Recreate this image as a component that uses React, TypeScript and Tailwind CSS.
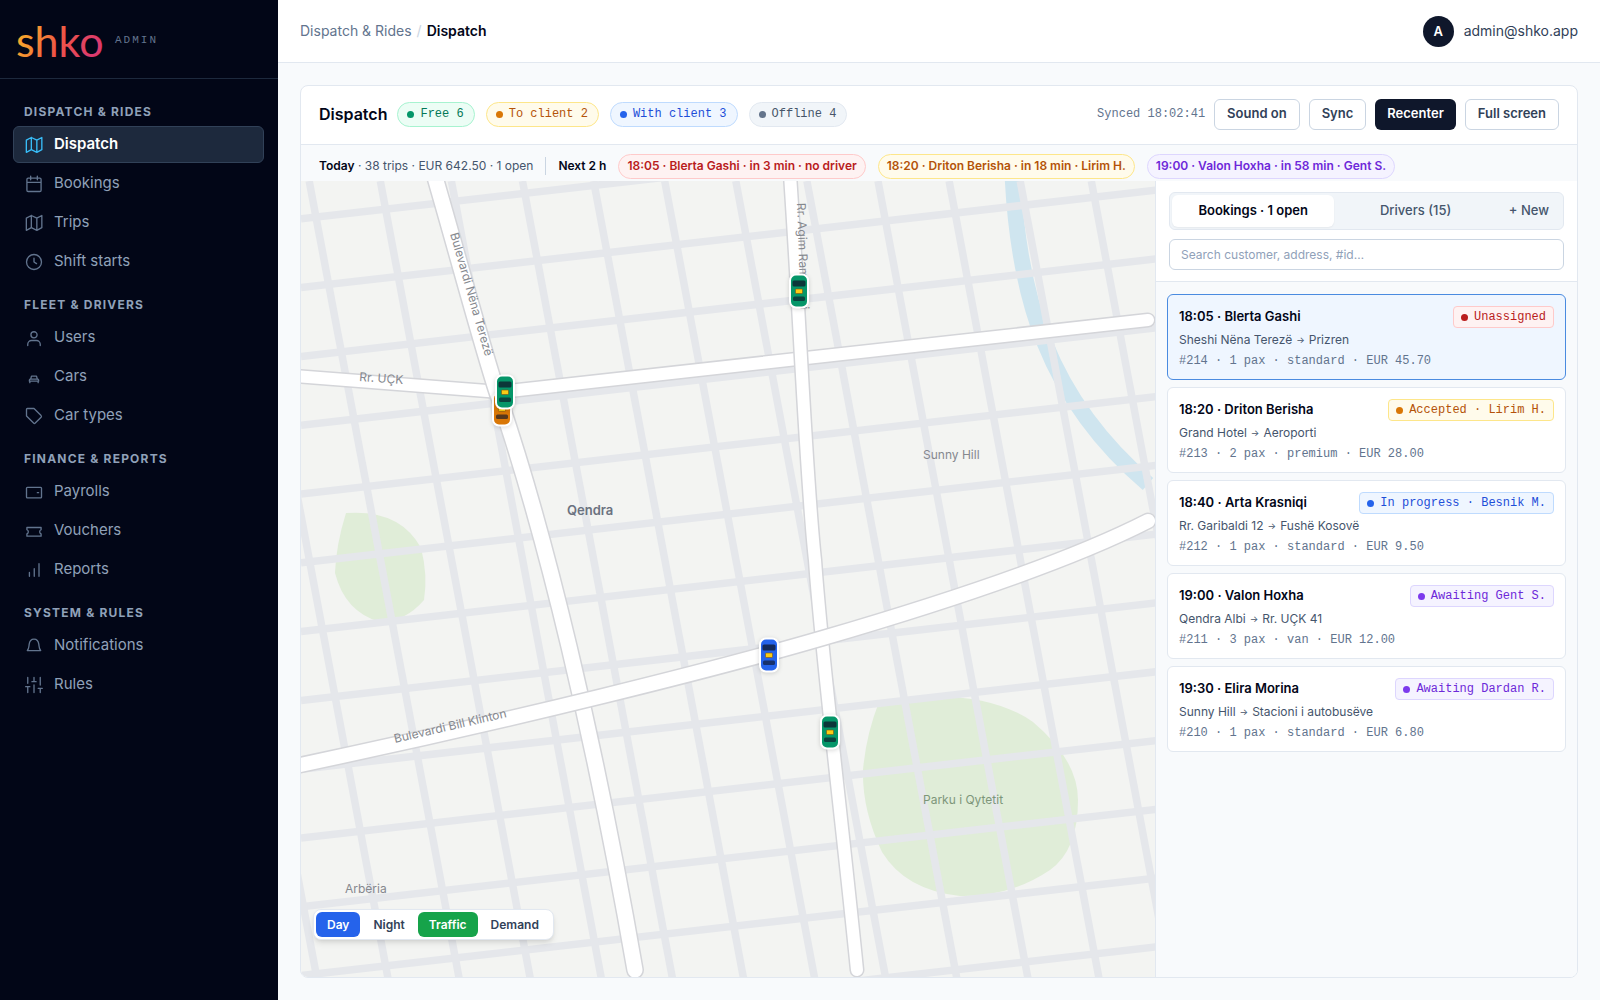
import { useState } from "react";

type Tone = "green" | "amber" | "blue" | "gray" | "red" | "violet";

const toneClasses: Record<Tone, string> = {
  green: "border-[#a7f3d0] bg-[#ecfdf5] text-[#047857]",
  amber: "border-[#fde68a] bg-[#fffbeb] text-[#b45309]",
  blue: "border-[#bfdbfe] bg-[#eff6ff] text-[#1d4ed8]",
  gray: "border-[#e2e8f0] bg-[#f1f5f9] text-[#475569]",
  red: "border-[#fecaca] bg-[#fef2f2] text-[#b91c1c]",
  violet: "border-[#ddd6fe] bg-[#f5f3ff] text-[#6d28d9]",
};

const dotClasses: Record<Tone, string> = {
  green: "bg-[#059669]",
  amber: "bg-[#d97706]",
  blue: "bg-[#2563eb]",
  gray: "bg-[#64748b]",
  red: "bg-[#b91c1c]",
  violet: "bg-[#7c3aed]",
};

const icons: Record<string, string> = {
  map: "M2.8 6.2v14.6l6-3.2 6.6 3.2 6-3.2V3l-6 3.2L8.8 3zM8.8 3v14.6M15.4 6.2v14.6",
  calendar:
    "M5 5h14a1.5 1.5 0 0 1 1.5 1.5v13a1.5 1.5 0 0 1-1.5 1.5H5a1.5 1.5 0 0 1-1.5-1.5v-13A1.5 1.5 0 0 1 5 5zM3.5 10h17M8 2.5V7M16 2.5V7",
  clock: "M12 3a9 9 0 1 1 0 18 9 9 0 0 1 0-18zM12 7.5V12l3 2",
  user: "M12 4.5a3.7 3.7 0 1 1 0 7.4 3.7 3.7 0 0 1 0-7.4zM4.5 21v-1.5A4.5 4.5 0 0 1 9 15h6a4.5 4.5 0 0 1 4.5 4.5V21",
  car: "M8 14.5L9 11h6l1 3.5M6.5 17v-1.5l1-1h9l1 1V17h-11zM7 17v1.8M17 17v1.8",
  tag: "M3 4a1 1 0 0 1 1-1h8l8.5 8.5a1.5 1.5 0 0 1 0 2l-7 7a1.5 1.5 0 0 1-2 0L3 12z",
  wallet: "M4 6.5h16a1 1 0 0 1 1 1V18a1 1 0 0 1-1 1H4a1 1 0 0 1-1-1V7.5a1 1 0 0 1 1-1zM16 12.8h1.5",
  ticket: "M3.5 7.8h17v2.7a2.7 2.7 0 0 0 0 5v2.7h-17v-2.7a2.7 2.7 0 0 0 0-5z",
  bars: "M6.5 19.5V15M12.3 19.5v-9M18 19.5v-15",
  bell: "M4 17.5h16c-2-2-1.8-4.5-2.2-7.5C17.3 6 15 3.7 12 3.7S6.7 6 6.2 10C5.8 13 6 15.5 4 17.5z",
  sliders: "M4.5 21v-7M4.5 10V3M12 21v-9M12 8V3M19.5 21v-5M19.5 12V3M2 14h5M9.5 8h5M17 16h5",
};

const navGroups = [
  {
    title: "DISPATCH & RIDES",
    items: [
      { label: "Dispatch", icon: "map" },
      { label: "Bookings", icon: "calendar" },
      { label: "Trips", icon: "map" },
      { label: "Shift starts", icon: "clock" },
    ],
  },
  {
    title: "FLEET & DRIVERS",
    items: [
      { label: "Users", icon: "user" },
      { label: "Cars", icon: "car" },
      { label: "Car types", icon: "tag" },
    ],
  },
  {
    title: "FINANCE & REPORTS",
    items: [
      { label: "Payrolls", icon: "wallet" },
      { label: "Vouchers", icon: "ticket" },
      { label: "Reports", icon: "bars" },
    ],
  },
  {
    title: "SYSTEM & RULES",
    items: [
      { label: "Notifications", icon: "bell" },
      { label: "Rules", icon: "sliders" },
    ],
  },
];

const counters: { label: string; tone: Tone }[] = [
  { label: "Free 6", tone: "green" },
  { label: "To client 2", tone: "amber" },
  { label: "With client 3", tone: "blue" },
  { label: "Offline 4", tone: "gray" },
];

const upcoming: { label: string; tone: Tone }[] = [
  { label: "18:05 · Blerta Gashi · in 3 min · no driver", tone: "red" },
  { label: "18:20 · Driton Berisha · in 18 min · Lirim H.", tone: "amber" },
  { label: "19:00 · Valon Hoxha · in 58 min · Gent S.", tone: "violet" },
];

interface Booking {
  id: number;
  title: string;
  from: string;
  to: string;
  meta: string;
  status: string;
  tone: Tone;
}

const bookings: Booking[] = [
  {
    id: 214,
    title: "18:05 · Blerta Gashi",
    from: "Sheshi Nëna Terezë",
    to: "Prizren",
    meta: "#214 · 1 pax · standard · EUR 45.70",
    status: "Unassigned",
    tone: "red",
  },
  {
    id: 213,
    title: "18:20 · Driton Berisha",
    from: "Grand Hotel",
    to: "Aeroporti",
    meta: "#213 · 2 pax · premium · EUR 28.00",
    status: "Accepted · Lirim H.",
    tone: "amber",
  },
  {
    id: 212,
    title: "18:40 · Arta Krasniqi",
    from: "Rr. Garibaldi 12",
    to: "Fushë Kosovë",
    meta: "#212 · 1 pax · standard · EUR 9.50",
    status: "In progress · Besnik M.",
    tone: "blue",
  },
  {
    id: 211,
    title: "19:00 · Valon Hoxha",
    from: "Qendra Albi",
    to: "Rr. UÇK 41",
    meta: "#211 · 3 pax · van · EUR 12.00",
    status: "Awaiting Gent S.",
    tone: "violet",
  },
  {
    id: 210,
    title: "19:30 · Elira Morina",
    from: "Sunny Hill",
    to: "Stacioni i autobusëve",
    meta: "#210 · 1 pax · standard · EUR 6.80",
    status: "Awaiting Dardan R.",
    tone: "violet",
  },
];

const roads = [
  { d: "M281 375L500 392L1148 320", width: 12 },
  { d: "M789 160C799 300 806 480 815 560C822 660 842 820 857 970", width: 12 },
  { d: "M430 160C455 245 480 340 497 392C545 530 595 740 635 970", width: 15 },
  { d: "M281 769C520 719 720 668 823 638C926 608 1060 566 1148 521", width: 14 },
];

const cars = [
  { x: 502, y: 409, color: "#d97706" },
  { x: 505, y: 392, color: "#059669" },
  { x: 799, y: 291, color: "#059669" },
  { x: 769, y: 655, color: "#2563eb" },
  { x: 830, y: 732, color: "#059669" },
];

function NavIcon({ name }: { name: string }) {
  return (
    <svg
      viewBox="0 0 24 24"
      className="size-5 shrink-0"
      fill="none"
      stroke="currentColor"
      strokeWidth="1.6"
      strokeLinecap="round"
      strokeLinejoin="round"
      aria-hidden="true"
    >
      <path d={icons[name]} />
    </svg>
  );
}

function Logo() {
  return (
    <svg width="86" height="58" viewBox="0 0 86 58" className="overflow-visible" role="img" aria-label="shko">
      <defs>
        <linearGradient id="logo" x1="0" y1="0" x2="1" y2="0.3">
          <stop offset="0" stopColor="#fbbf24" />
          <stop offset="0.3" stopColor="#f59332" />
          <stop offset="0.6" stopColor="#ef5546" />
          <stop offset="1" stopColor="#db3a6e" />
        </linearGradient>
      </defs>
      <text x="-1" y="47" fill="url(#logo)" fontSize="43" fontFamily="Lato, sans-serif" fontWeight="400">
        shko
      </text>
    </svg>
  );
}

function Sidebar() {
  return (
    <aside className="flex w-[278px] shrink-0 flex-col bg-[#020617]">
      <div className="flex h-[79px] items-center gap-3 border-b border-slate-800 pl-[17px]">
        <Logo />
        <span className="pt-[3px] font-['Liberation_Mono',monospace] text-[11px] tracking-[2px] text-slate-500">
          ADMIN
        </span>
      </div>
      <nav className="flex flex-col gap-[17px] pt-[25px] pr-[14px] pl-[13px]">
        {navGroups.map((group) => (
          <div key={group.title}>
            <h2 className="mb-[6px] pl-[11px] text-xs leading-4 font-bold tracking-widest text-slate-400">
              {group.title}
            </h2>
            <ul className="flex flex-col gap-[2px]">
              {group.items.map((item) => {
                const active = item.label === "Dispatch";
                return (
                  <li key={item.label}>
                    <a
                      href="#"
                      aria-current={active ? "page" : undefined}
                      className={`flex h-[37px] items-center gap-[10px] rounded-md border px-[10px] text-[15px] ${
                        active
                          ? "border-slate-700 bg-slate-800 font-semibold text-white"
                          : "border-transparent text-slate-400"
                      }`}
                    >
                      <span className={active ? "text-[#38bdf8]" : "text-slate-500"}>
                        <NavIcon name={item.icon} />
                      </span>
                      {item.label}
                    </a>
                  </li>
                );
              })}
            </ul>
          </div>
        ))}
      </nav>
    </aside>
  );
}

function CarMarker({ x, y, color }: { x: number; y: number; color: string }) {
  return (
    <g transform={`translate(${x} ${y})`} className="drop-shadow-sm">
      <rect x="-9" y="-16.5" width="18" height="33" rx="6" fill={color} stroke="#fff" strokeWidth="2" />
      <rect x="-6.5" y="-10.5" width="13" height="6" rx="1.5" fill="#0f172a" opacity="0.75" />
      <rect x="-6" y="5.5" width="12" height="4.5" rx="1.5" fill="#0f172a" opacity="0.65" />
      <rect x="-3.5" y="-2" width="7" height="4.5" rx="0.8" fill="#facc15" stroke="#854d0e" strokeWidth="0.6" />
    </g>
  );
}

function CityMap() {
  const rows = Array.from({ length: 14 }, (_, i) => 150 + i * 68.8);
  const columns = Array.from({ length: 15 }, (_, i) => 167 + i * 71.1);

  return (
    <svg
      viewBox="301 181 854 796"
      preserveAspectRatio="xMidYMid slice"
      className="absolute inset-0 size-full"
      role="img"
      aria-label="City map with driver positions"
    >
      <rect x="0" y="0" width="1600" height="1200" fill="#f3f4f2" />
      <path d="M1012 160C1016 300 1050 400 1148 484" fill="none" stroke="#cfe5ef" strokeWidth="16" />
      <g fill="#e0edd8">
        <path d="M346 513Q400 509 421 548Q428 575 424 600Q405 622 380 622Q345 612 335 573Q336 545 346 513Z" />
        <path d="M879 702Q980 685 1033 722Q1078 760 1078 800Q1078 850 1050 870Q1010 897 960 896Q905 890 882 852Q862 810 863 770Q866 735 879 702Z" />
      </g>
      <g stroke="#e5e7eb" strokeWidth="7.5">
        {rows.map((y) => (
          <line key={y} x1="301" y1={y} x2="1161" y2={y - 98} />
        ))}
        {columns.map((x) => (
          <line key={x} x1={x} y1="181" x2={x + 151} y2="984" />
        ))}
      </g>
      <g fill="none" strokeLinecap="round" strokeLinejoin="round">
        {roads.map((road) => (
          <g key={road.d}>
            <path d={road.d} stroke="#d4d5d9" strokeWidth={road.width + 3} />
            <path d={road.d} stroke="#fff" strokeWidth={road.width} />
          </g>
        ))}
      </g>
      <g fontSize="12" fill="#85888e">
        <text transform="translate(450 234) rotate(74)">Bulevardi Nëna Terezë</text>
        <text transform="translate(797 203) rotate(88)">Rr. Agim Ramadani</text>
        <text transform="translate(359 381) rotate(4)">Rr. UÇK</text>
        <text transform="translate(395 743) rotate(-13)">Bulevardi Bill Klinton</text>
        <text x="923" y="459">Sunny Hill</text>
        <text x="345" y="893">Arbëria</text>
        <text x="923" y="804" fill="#7d967a">
          Parku i Qytetit
        </text>
        <text x="567" y="515" fontSize="13" fontWeight="600" fill="#6b7280">
          Qendra
        </text>
      </g>
      {cars.map((car) => (
        <CarMarker key={`${car.x}-${car.y}`} {...car} />
      ))}
    </svg>
  );
}

function MapControls() {
  const [night, setNight] = useState(false);
  const [traffic, setTraffic] = useState(true);
  const [demand, setDemand] = useState(false);

  const base = "h-[25px] rounded-md px-[11px] text-xs font-semibold";

  return (
    <div className="absolute bottom-[37px] left-3 flex gap-[2px] rounded-lg border border-slate-200 bg-white p-[2px] pr-[3px] shadow-md">
      <button
        onClick={() => setNight(false)}
        className={`${base} ${night ? "text-slate-700" : "bg-[#2563eb] text-white"}`}
      >
        Day
      </button>
      <button
        onClick={() => setNight(true)}
        className={`${base} ${night ? "bg-[#2563eb] text-white" : "text-slate-700"}`}
      >
        Night
      </button>
      <button
        onClick={() => setTraffic(!traffic)}
        className={`${base} ${traffic ? "bg-[#16a34a] text-white" : "text-slate-700"}`}
      >
        Traffic
      </button>
      <button
        onClick={() => setDemand(!demand)}
        className={`${base} ${demand ? "bg-[#16a34a] text-white" : "text-slate-700"}`}
      >
        Demand
      </button>
    </div>
  );
}

function BookingsPanel() {
  const [selected, setSelected] = useState(214);
  const [query, setQuery] = useState("");

  return (
    <section className="flex w-[422px] shrink-0 flex-col border-l border-slate-200 bg-slate-50">
      <div className="flex flex-col gap-[9px] border-b border-slate-200 bg-white px-[13px] py-[11px]">
        <div className="flex h-[38px] rounded-md border border-slate-200 bg-slate-100 p-[2px] text-[13px] text-slate-600">
          <button className="flex-1 rounded-md bg-white font-semibold text-slate-950 shadow-xs">
            Bookings · 1 open
          </button>
          <button className="flex-1 font-medium">Drivers (15)</button>
          <button className="px-3 font-medium">+ New</button>
        </div>
        <input
          type="text"
          aria-label="Search bookings"
          value={query}
          onChange={(e) => setQuery(e.target.value)}
          placeholder="Search customer, address, #id…"
          className="h-[31px] rounded-md border border-slate-300 bg-white px-[11px] text-xs text-slate-700 placeholder:text-slate-400"
        />
      </div>
      <ul className="flex flex-col gap-[7px] px-[11px] py-3">
        {bookings.map((booking) => (
          <li key={booking.id}>
            <button
              onClick={() => setSelected(booking.id)}
              className={`flex w-full flex-col gap-1 rounded-md border px-[11px] pt-[11px] pb-[9px] text-left ${
                selected === booking.id ? "border-[#4a8be0] bg-[#eff6ff]" : "border-slate-200 bg-white"
              }`}
            >
              <span className="flex h-[22px] w-full items-center justify-between">
                <span className="text-[13px] font-semibold text-slate-950">{booking.title}</span>
                <span
                  className={`flex h-[22px] items-center gap-[6px] rounded-sm border px-[7px] font-['Liberation_Mono',monospace] text-xs ${toneClasses[booking.tone]}`}
                >
                  <span className={`size-[7px] rounded-full ${dotClasses[booking.tone]}`} />
                  {booking.status}
                </span>
              </span>
              <span className="flex gap-1 text-xs leading-4 text-slate-600">
                {booking.from}
                <span className="text-[9px]">→</span>
                {booking.to}
              </span>
              <span className="font-['Liberation_Mono',monospace] text-xs leading-[18px] text-slate-500">
                {booking.meta}
              </span>
            </button>
          </li>
        ))}
      </ul>
    </section>
  );
}

export default function App() {
  const outlineButton =
    "h-[31px] rounded-md border border-slate-300 bg-white px-3 text-[13px] font-semibold text-slate-700";

  return (
    <div className="flex min-h-screen bg-slate-50 font-[Inter,'Noto_Sans',sans-serif] text-slate-950">
      <Sidebar />
      <div className="flex min-w-0 flex-1 flex-col">
        <header className="flex h-[63px] items-center justify-between border-b border-slate-200 bg-white px-[22px] text-sm">
          <div className="flex gap-[5px]">
            <a href="#" className="text-slate-500">
              Dispatch &amp; Rides
            </a>
            <span className="text-slate-300">/</span>
            <span className="font-semibold">Dispatch</span>
          </div>
          <div className="flex items-center gap-[10px] text-slate-700">
            <span className="flex size-[31px] items-center justify-center rounded-full bg-slate-900 text-[13px] font-semibold text-white">
              A
            </span>
            admin@shko.app
          </div>
        </header>

        <main className="flex flex-1 p-[22px]">
          <div className="flex min-w-0 flex-1 flex-col overflow-hidden rounded-lg border border-slate-200 bg-white">
            <div className="flex h-[59px] items-center justify-between border-b border-slate-200 px-[18px] pb-[2px]">
              <div className="flex items-center gap-[10px]">
                <h1 className="text-base font-semibold">Dispatch</h1>
                <div className="flex gap-[11px]">
                  {counters.map((counter) => (
                    <span
                      key={counter.label}
                      className={`flex h-[25px] items-center gap-[6px] rounded-full border pr-[10px] pl-[9px] font-['Liberation_Mono',monospace] text-xs ${toneClasses[counter.tone]}`}
                    >
                      <span className={`size-[7px] rounded-full ${dotClasses[counter.tone]}`} />
                      {counter.label}
                    </span>
                  ))}
                </div>
              </div>
              <div className="flex items-center gap-[9px]">
                <span className="font-['Liberation_Mono',monospace] text-xs text-slate-500">Synced 18:02:41</span>
                <button className={outlineButton}>Sound on</button>
                <button className={outlineButton}>Sync</button>
                <button className="h-[31px] rounded-md bg-slate-900 px-3 text-[13px] font-semibold text-white">
                  Recenter
                </button>
                <button className={outlineButton}>Full screen</button>
              </div>
            </div>

            <div className="flex h-9 items-center gap-3 bg-slate-50 px-[18px] pt-[6px] text-xs">
              <p className="text-slate-600">
                <strong className="font-semibold text-slate-950">Today</strong> · 38 trips · EUR 642.50 · 1 open
              </p>
              <span className="h-[18px] w-px bg-slate-300" />
              <strong className="font-semibold">Next 2 h</strong>
              {upcoming.map((trip) => (
                <span
                  key={trip.label}
                  className={`flex h-[25px] items-center rounded-full border px-2 font-semibold ${toneClasses[trip.tone]}`}
                >
                  {trip.label}
                </span>
              ))}
            </div>

            <div className="flex flex-1">
              <div className="relative min-w-0 flex-1 overflow-hidden">
                <CityMap />
                <MapControls />
              </div>
              <BookingsPanel />
            </div>
          </div>
        </main>
      </div>
    </div>
  );
}
